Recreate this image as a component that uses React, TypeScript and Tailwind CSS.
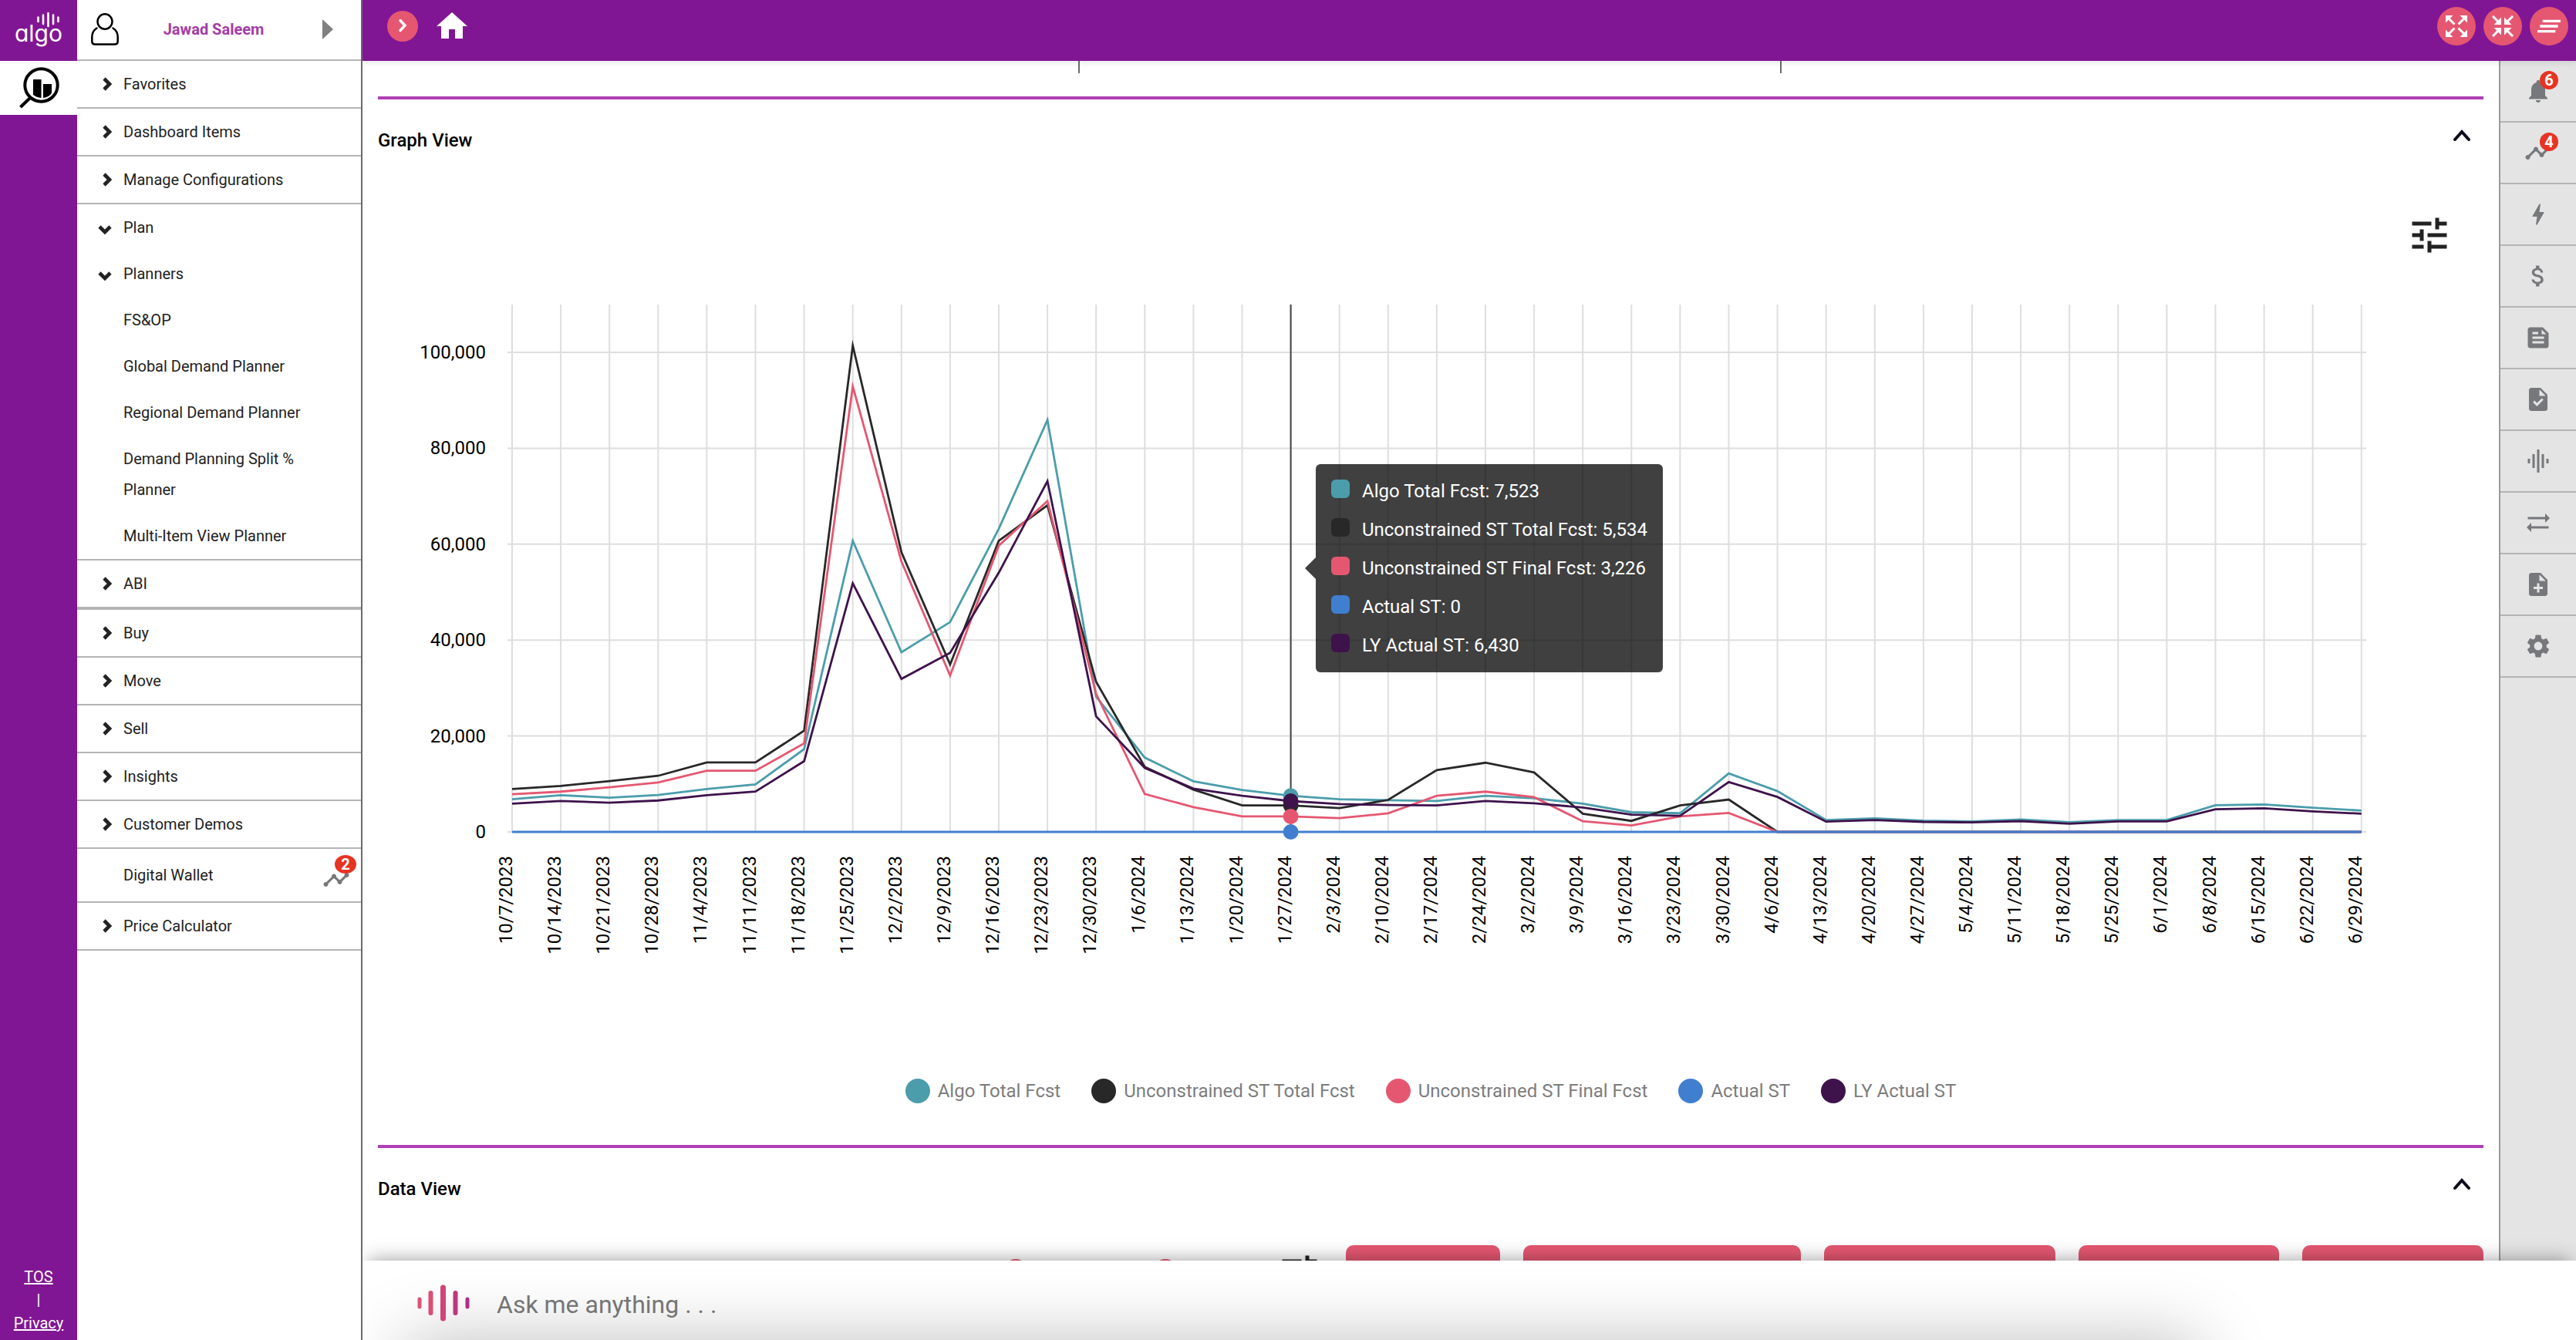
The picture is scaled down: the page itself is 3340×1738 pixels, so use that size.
import { useState } from "react";
import type { ReactNode } from "react";
import {
  MdAttachMoney,
  MdBolt,
  MdClearAll,
  MdFeed,
  MdGraphicEq,
  MdHome,
  MdNoteAdd,
  MdNotifications,
  MdSettings,
  MdSyncAlt,
  MdTask,
  MdTimeline,
  MdTune,
} from "react-icons/md";

const dates = [
  "10/7/2023", "10/14/2023", "10/21/2023", "10/28/2023", "11/4/2023", "11/11/2023", "11/18/2023",
  "11/25/2023", "12/2/2023", "12/9/2023", "12/16/2023", "12/23/2023", "12/30/2023", "1/6/2024",
  "1/13/2024", "1/20/2024", "1/27/2024", "2/3/2024", "2/10/2024", "2/17/2024", "2/24/2024",
  "3/2/2024", "3/9/2024", "3/16/2024", "3/23/2024", "3/30/2024", "4/6/2024", "4/13/2024",
  "4/20/2024", "4/27/2024", "5/4/2024", "5/11/2024", "5/18/2024", "5/25/2024", "6/1/2024",
  "6/8/2024", "6/15/2024", "6/22/2024", "6/29/2024",
];

const series = [
  {
    name: "Algo Total Fcst",
    color: "#4b9dab",
    data: [
      6800, 7650, 7150, 7700, 8950, 9900, 17250, 60700, 37450, 43750, 63200, 85900, 28200, 15500,
      10550, 8750, 7523, 6820, 6600, 6460, 7540, 7030, 5900, 4100, 3900, 12200, 8500, 2470, 2840,
      2360, 2200, 2570, 2040, 2470, 2470, 5570, 5740, 5040, 4450,
    ],
  },
  {
    name: "Unconstrained ST Total Fcst",
    color: "#282828",
    data: [
      8950, 9600, 10600, 11700, 14500, 14500, 21100, 101400, 58300, 34900, 60700, 68100, 31300,
      13560, 8830, 5530, 5534, 4950, 6670, 12900, 14430, 12400, 3800, 2300, 5530, 6750, 0, 0, 0, 0,
      0, 0, 0, 0, 0, 0, 0, 0, 0,
    ],
  },
  {
    name: "Unconstrained ST Final Fcst",
    color: "#e55771",
    data: [
      7850, 8400, 9300, 10300, 12750, 12750, 18450, 92900, 56400, 32600, 59700, 69000, 28800, 7900,
      5170, 3230, 3226, 2870, 3880, 7540, 8400, 7250, 2220, 1360, 3230, 3950, 0, 0, 0, 0, 0, 0, 0,
      0, 0, 0, 0, 0, 0,
    ],
  },
  {
    name: "Actual ST",
    color: "#407ed0",
    data: dates.map(() => 0),
  },
  {
    name: "LY Actual ST",
    color: "#3e124b",
    data: [
      5900, 6450, 6100, 6550, 7650, 8400, 14750, 51850, 31900, 37360, 54050, 73150, 24100, 13350,
      9040, 7540, 6430, 5810, 5600, 5530, 6460, 5960, 5100, 3590, 3370, 10400, 7290, 2140, 2470,
      2090, 1980, 2250, 1700, 2200, 2200, 4720, 4930, 4290, 3800,
    ],
  },
];

const activeIndex = 16;
const yTicks = [0, 20000, 40000, 60000, 80000, 100000];

const xAt = (i: number) => 174 + i * 63.1;
const yAt = (v: number) => 714 - v * 0.00622;

function Chevron({ dir }: { dir: "right" | "down" }) {
  const points = {
    right: "9,3 16,10 9,17",
    down: "3,9 10,16 17,9",
  }[dir];
  return (
    <svg viewBox="0 0 20 20" className="h-5 w-5" fill="none" stroke="currentColor" strokeWidth="4.6">
      <polyline points={points} />
    </svg>
  );
}

function Badge({ children }: { children: ReactNode }) {
  return (
    <span className="absolute -top-2 left-5 flex h-6 min-w-6 items-center justify-center rounded-full bg-[#e63424] text-[20px] leading-6 font-bold text-white">
      {children}
    </span>
  );
}

function AlgoLogo() {
  return (
    <svg viewBox="0 0 100 79" className="h-[79px] w-full" aria-label="algo">
      <g stroke="#fff" strokeWidth="2.6" strokeLinecap="round">
        <path d="M49.5 22.500v5.500M56 19.500v11.500M62.500 17v17M69 19.500v11.500M75.500 22.500v5.500" />
      </g>
      <text
        x="50"
        y="54"
        textAnchor="middle"
        fill="#fff"
        fontSize="30"
        fontFamily="Inter, sans-serif"
        style={{ fontFeatureSettings: '"cv11", "ss03"' }}
      >
        algo
      </text>
    </svg>
  );
}

function Rail() {
  return (
    <aside className="flex w-[100px] shrink-0 flex-col bg-[#811694] text-white">
      <AlgoLogo />
      <button className="flex h-[70px] items-center justify-center bg-white" aria-label="Analytics">
        <svg viewBox="0 0 100 70" className="h-[70px] w-[100px]" fill="none">
          <circle cx="53.5" cy="31.5" r="21.2" stroke="#000" strokeWidth="4" />
          <path d="M39 48 26.500 60" stroke="#000" strokeWidth="4" />
          <path d="M43 24h10.500v24c-4-.3-7.500-1.800-10.500-4z" fill="#000" />
          <path d="M56 30h11v11.500c-2.500 4-6 6-11 6.500z" fill="#000" />
        </svg>
      </button>
      <div className="mt-auto flex flex-col items-center pb-[7px] text-[20px] leading-[30px]">
        <a href="#tos" className="underline">
          TOS
        </a>
        <span>|</span>
        <a href="#privacy" className="underline">
          Privacy
        </a>
      </div>
    </aside>
  );
}

type NavItemProps = {
  label: string;
  dir?: "right" | "down";
  border?: string;
  children?: ReactNode;
};

function NavItem({ label, dir, border = "border-b-2", children }: NavItemProps) {
  return (
    <li className={`relative border-[#b4b4b4] ${border}`}>
      <button className="flex w-full items-center py-[10px] pr-[60px] pl-[26px] text-left leading-10">
        <span className="flex w-[34px] shrink-0">{dir && <Chevron dir={dir} />}</span>
        {label}
      </button>
      {children}
    </li>
  );
}

function Sidebar() {
  return (
    <nav className="w-[370px] shrink-0 border-r-2 border-[#6b6b6b] bg-white text-[20px] text-[#222]">
      <div className="flex h-[79px] items-center border-b-2 border-[#b4b4b4] pr-[36px] pb-[2px] pl-[16px]">
        <svg viewBox="0 0 40 44" className="h-11 w-10 shrink-0" fill="none" stroke="#000" strokeWidth="2.500">
          <ellipse cx="20" cy="12" rx="9.500" ry="9.800" />
          <path d="M9.500 20.500C5.500 23 3.300 27 3.300 32v5.500c0 2.500 1.500 4 4 4h25.400c2.500 0 4-1.500 4-4V32c0-5-2.200-9-6.200-11.500" strokeLinecap="round" />
        </svg>
        <span className="flex-1 pr-5 text-center font-bold text-[#a33ca6]">Jawad Saleem</span>
        <svg viewBox="0 0 14 26" className="h-[26px] w-[14px]" fill="#808080">
          <path d="M0 0 14 13 0 26z" />
        </svg>
      </div>
      <ul>
        <NavItem label="Favorites" dir="right" />
        <NavItem label="Dashboard Items" dir="right" />
        <NavItem label="Manage Configurations" dir="right" />
        <NavItem label="Plan" dir="down" border="border-b-0" />
        <NavItem label="Planners" dir="down" border="border-b-0" />
        <NavItem label="FS&OP" border="border-b-0" />
        <NavItem label="Global Demand Planner" border="border-b-0" />
        <NavItem label="Regional Demand Planner" border="border-b-0" />
        <NavItem label="Demand Planning Split % Planner" border="border-b-0" />
        <NavItem label="Multi-Item View Planner" />
        <NavItem label="ABI" dir="right" border="border-b-4" />
        <NavItem label="Buy" dir="right" />
        <NavItem label="Move" dir="right" />
        <NavItem label="Sell" dir="right" />
        <NavItem label="Insights" dir="right" />
        <NavItem label="Customer Demos" dir="right" />
        <NavItem label="Digital Wallet" border="border-b-2 py-1">
          <span className="absolute top-[22px] right-[14px] text-[#77787b]">
            <MdTimeline size={36} />
            <span className="absolute -top-[14px] left-[16px] flex h-6 w-7 items-center justify-center rounded-[50%] bg-[#e63424] text-[20px] leading-6 font-bold text-white">
              2
            </span>
          </span>
        </NavItem>
        <NavItem label="Price Calculator" dir="right" />
      </ul>
    </nav>
  );
}

function TopBar() {
  return (
    <header className="z-10 flex h-[79px] shrink-0 items-start bg-[#811694] pl-8 pr-[10px] shadow-[0_2px_8px_rgba(0,0,0,0.1)]">
      <button className="mt-[14px] flex h-10 w-10 items-center justify-center rounded-full bg-[#e55771]" aria-label="Expand menu">
        <svg viewBox="0 0 20 20" className="h-5 w-5" fill="none" stroke="#fff" strokeWidth="3.400" strokeLinecap="round">
          <polyline points="7,2.500 13,9 7,15.500" />
        </svg>
      </button>
      <a href="#home" aria-label="Home" className="mt-[10px] ml-5 text-white">
        <MdHome size={48} />
      </a>
      <div className="mt-[9px] ml-auto flex gap-[10px]">
        <button className="flex h-[50px] w-[50px] items-center justify-center rounded-full bg-[#e55771]" aria-label="Expand all">
          <svg viewBox="0 0 28 28" className="h-7 w-7" fill="#fff" stroke="#fff" strokeWidth="3">
            <path stroke="none" d="M0 0h9.500L0 9.500zM28 0h-9.500L28 9.500zM0 28h9.500L0 18.500zM28 28h-9.500L28 18.500z" />
            <path d="M3 3l8.500 8.500M25 3l-8.500 8.500M3 25l8.500-8.500M25 25l-8.500-8.500" />
          </svg>
        </button>
        <button className="flex h-[50px] w-[50px] items-center justify-center rounded-full bg-[#e55771]" aria-label="Collapse all">
          <svg viewBox="0 0 28 28" className="h-7 w-7" fill="#fff" stroke="#fff" strokeWidth="3">
            <path stroke="none" d="M12 12H2.500L12 2.500zM16 12h9.500L16 2.500zM12 16H2.500l9.500 9.500zM16 16h9.500L16 25.500z" />
            <path d="M1 1l8.500 8.500M27 1l-8.500 8.500M1 27l8.500-8.500M27 27l-8.500-8.500" />
          </svg>
        </button>
        <button className="flex h-[50px] w-[50px] items-center justify-center rounded-full bg-[#e55771] text-white" aria-label="Clear">
          <MdClearAll size={40} />
        </button>
      </div>
    </header>
  );
}

function SectionHeader({ title, onToggle }: { title: string; onToggle: () => void }) {
  return (
    <div className="flex h-[114px] items-center justify-between border-t-4 border-[#b03fb5] pr-[16px] pb-1">
      <h2 className="text-[24px] leading-8 font-medium text-black">{title}</h2>
      <button onClick={onToggle} aria-label={`Toggle ${title}`} className="pb-[14px] text-[#0c0c1a]">
        <svg viewBox="0 0 24 24" className="h-6 w-6" fill="none" stroke="currentColor" strokeWidth="4" strokeLinecap="round">
          <polyline points="3,18 12,8 21,18" />
        </svg>
      </button>
    </div>
  );
}

function Tooltip() {
  return (
    <div className="absolute top-[26%] left-[44.542%] rounded-md bg-black/75 py-[10px] pr-5 pl-5 text-[24px] text-white">
      <svg viewBox="0 0 14 28" className="absolute top-1/2 right-full h-7 w-[14px] -translate-y-1/2" fill="rgba(0,0,0,0.75)">
        <path d="M14 0 0 14l14 14z" />
      </svg>
      <ul>
        {series.map((s) => (
          <li key={s.name} className="flex items-start gap-4 leading-[50px] whitespace-nowrap">
            <span className="mt-[10px] h-6 w-6 rounded-md" style={{ backgroundColor: s.color }} />
            {s.name}: {s.data[activeIndex].toLocaleString("en-US")}
          </li>
        ))}
      </ul>
    </div>
  );
}

function Chart() {
  return (
    <div className="relative">
      <svg viewBox="0 0 2730 910" className="block h-auto w-full" fontFamily="Roboto, sans-serif" fontSize="24">
        <g stroke="#dedede" strokeWidth="2">
          {yTicks.map((t) => (
            <line key={t} x1="168" x2="2578" y1={yAt(t)} y2={yAt(t)} />
          ))}
          {dates.map((d, i) => (
            <line key={d} x1={xAt(i)} x2={xAt(i)} y1="30" y2="714" />
          ))}
        </g>
        {yTicks.map((t) => (
          <text key={t} x="140" y={yAt(t) + 8} textAnchor="end">
            {t.toLocaleString("en-US")}
          </text>
        ))}
        {dates.map((d, i) => (
          <text key={d} transform={`translate(${xAt(i)} 745) rotate(-90)`} textAnchor="end">
            {d}
          </text>
        ))}
        <line x1={xAt(activeIndex)} x2={xAt(activeIndex)} y1="30" y2="714" stroke="#444" strokeWidth="2" />
        {series.map((s) => (
          <polyline
            key={s.name}
            points={s.data.map((v, i) => `${xAt(i)},${yAt(v)}`).join(" ")}
            fill="none"
            stroke={s.color}
            strokeWidth="2.8"
            strokeMiterlimit="8"
          />
        ))}
        {series.map((s) => (
          <circle key={s.name} cx={xAt(activeIndex)} cy={yAt(s.data[activeIndex])} r="10" fill={s.color} />
        ))}
      </svg>
      <Tooltip />
    </div>
  );
}

function GraphView() {
  const [open, setOpen] = useState(true);
  return (
    <section>
      <SectionHeader title="Graph View" onToggle={() => setOpen(!open)} />
      {open && (
        <>
          <div className="flex h-[126px] items-center justify-end pt-[6px] pr-[40px] text-[#222]">
            <button aria-label="Chart settings">
              <MdTune size={60} />
            </button>
          </div>
          <Chart />
          <ul className="flex h-[210px] items-center justify-center gap-10 pt-[70px] text-[24px] text-[#7d7d7d]">
            {series.map((s) => (
              <li key={s.name} className="flex items-center gap-[10px]">
                <span className="h-8 w-8 rounded-full" style={{ backgroundColor: s.color }} />
                {s.name}
              </li>
            ))}
          </ul>
        </>
      )}
    </section>
  );
}

function DataView() {
  const [open, setOpen] = useState(true);
  return (
    <section>
      <SectionHeader title="Data View" onToggle={() => setOpen(!open)} />
      {open && (
        <div className="flex items-start justify-end gap-[30px] pt-4">
          <input type="radio" name="mode" aria-label="Units" className="mt-[18px] mr-[132px] h-8 w-8 appearance-none rounded-full bg-[#e55771]" />
          <input type="radio" name="mode" aria-label="Value" className="mt-[18px] mr-[98px] h-8 w-8 appearance-none rounded-full bg-[#e55771]" />
          <button aria-label="Table settings" className="mt-[6px] text-[#222]">
            <MdTune size={60} />
          </button>
          <button aria-label="Save" className="h-[60px] w-[200px] rounded-[10px] bg-[#e55771]" />
          <button aria-label="Save scenario" className="h-[60px] w-[360px] rounded-[10px] bg-[#e55771]" />
          <button aria-label="Load scenario" className="h-[60px] w-[300px] rounded-[10px] bg-[#e55771]" />
          <button aria-label="Download" className="h-[60px] w-[260px] rounded-[10px] bg-[#e55771]" />
          <button aria-label="Upload" className="h-[60px] w-[235px] rounded-[10px] bg-[#e55771]" />
        </div>
      )}
    </section>
  );
}

const tools = [
  { label: "Notifications", Icon: MdNotifications, badge: 6 },
  { label: "Trends", Icon: MdTimeline, badge: 4 },
  { label: "Actions", Icon: MdBolt },
  { label: "Pricing", Icon: MdAttachMoney },
  { label: "Feed", Icon: MdFeed },
  { label: "Tasks", Icon: MdTask },
  { label: "Voice", Icon: MdGraphicEq },
  { label: "Transfers", Icon: MdSyncAlt },
  { label: "Add note", Icon: MdNoteAdd },
  { label: "Settings", Icon: MdSettings },
];

function ToolRail() {
  return (
    <aside className="w-[100px] shrink-0 border-l-2 border-[#9b9b9b] bg-[#e4e4e4]">
      {tools.map(({ label, Icon, badge }) => (
        <button
          key={label}
          aria-label={label}
          className="flex h-20 w-full items-center justify-center border-b-2 border-[#b4b4b4] text-[#77787b]"
        >
          <span className="relative">
            <Icon size={36} />
            {badge && <Badge>{badge}</Badge>}
          </span>
        </button>
      ))}
    </aside>
  );
}

function AskBar() {
  return (
    <footer className="absolute inset-x-0 bottom-0 z-10 h-[103px] bg-white shadow-[0_-8px_24px_-8px_rgba(0,0,0,0.4)]">
      <div className="relative flex h-full items-center overflow-hidden pt-[6px] pl-[70px]">
        {/* glow rising from the bottom edge */}
        <div className="absolute top-full left-[55px] h-40 w-[81%] shadow-[0_0_90px_rgba(0,0,0,0.25)]" />
        <svg viewBox="0 0 70 48" className="relative h-12 w-[70px]" strokeWidth="6" strokeLinecap="round">
          <path d="M4 19v10" stroke="#dd5474" strokeWidth="5" />
          <path d="M18.500 11v26" stroke="#d94f76" />
          <path d="M34.500 4v40" stroke="#d04478" strokeWidth="7" />
          <path d="M50.500 11v26" stroke="#c0367c" />
          <path d="M66 19v10" stroke="#b02e84" strokeWidth="5" />
        </svg>
        <input
          type="text"
          aria-label="Ask me anything"
          placeholder="Ask me anything . . ."
          className="relative ml-[34px] flex-1 bg-transparent pt-1 text-[32px] leading-10 outline-none placeholder:text-[#757575]"
        />
      </div>
    </footer>
  );
}

export default function App() {
  return (
    <div className="flex h-screen overflow-hidden bg-white font-[Roboto,sans-serif]">
      <Rail />
      <Sidebar />
      <div className="relative flex min-w-0 flex-1 flex-col overflow-hidden">
        <TopBar />
        <div className="flex min-h-0 flex-1">
          <main className="min-w-0 flex-1 overflow-hidden px-5">
            {/* tail of the filter columns above the graph */}
            <div className="flex h-[46px] items-start">
              <div className="h-4 w-1/3 border-r-2 border-[#6b6b6b]" />
              <div className="h-4 w-1/3 border-r-2 border-[#6b6b6b]" />
            </div>
            <GraphView />
            <DataView />
          </main>
          <ToolRail />
        </div>
        <AskBar />
      </div>
    </div>
  );
}
